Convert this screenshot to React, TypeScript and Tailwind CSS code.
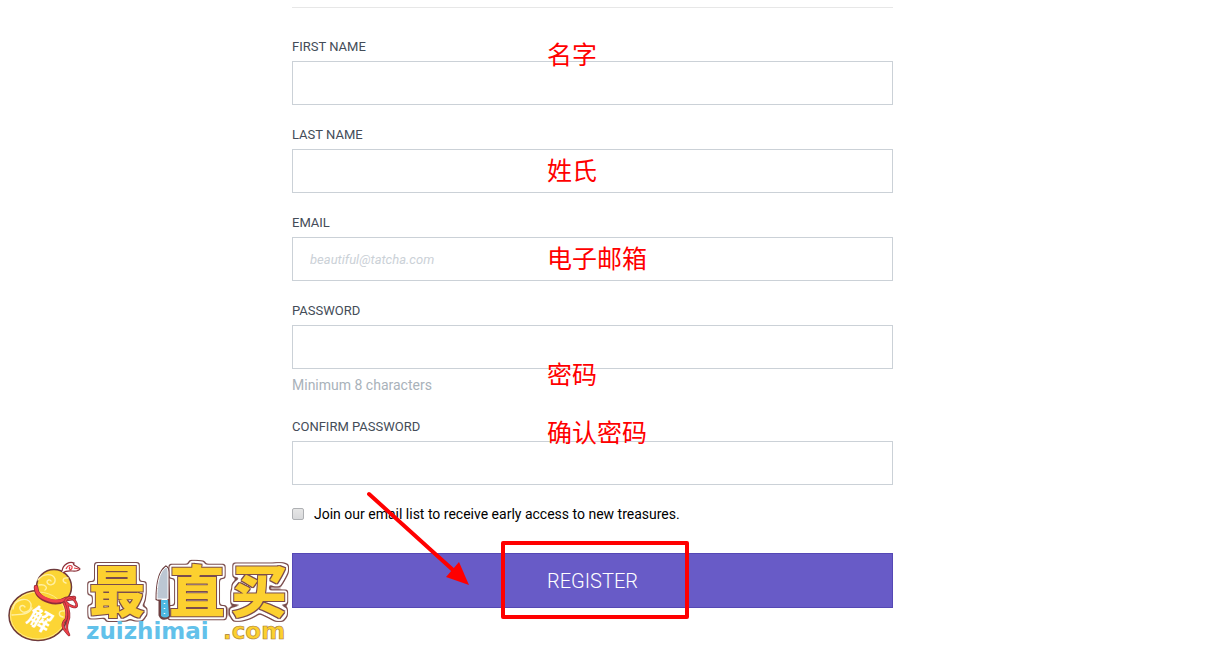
import { useState } from "react";

const fields = [
  { id: "firstName", label: "FIRST NAME", type: "text", note: "名字", notePos: "top-1" },
  { id: "lastName", label: "LAST NAME", type: "text", note: "姓氏", notePos: "top-8" },
  { id: "email", label: "EMAIL", type: "email", placeholder: "beautiful@tatcha.com", note: "电子邮箱", notePos: "top-8" },
  { id: "password", label: "PASSWORD", type: "password", hint: "Minimum 8 characters", note: "密码", notePos: "top-15" },
  { id: "confirmPassword", label: "CONFIRM PASSWORD", type: "password", note: "确认密码", notePos: "top-0.5" },
];

function Logo() {
  return (
    <svg width="295" height="94" viewBox="0 555 295 94" className="absolute bottom-0 left-0 overflow-visible" aria-label="zuizhimai.com">
      <defs>
        {/* brown / white / brown rings round the big characters */}
        <filter id="rings" x="-10%" y="-10%" width="120%" height="120%" colorInterpolationFilters="sRGB">
          <feMorphology in="SourceAlpha" operator="dilate" radius="4" result="outerBox" />
          <feGaussianBlur in="outerBox" stdDeviation="1.5" />
          <feComponentTransfer result="outer">
            <feFuncA type="linear" slope="4" intercept="-1.5" />
          </feComponentTransfer>
          <feMorphology in="SourceAlpha" operator="dilate" radius="3" result="middleBox" />
          <feGaussianBlur in="middleBox" stdDeviation="1.5" />
          <feComponentTransfer result="middle">
            <feFuncA type="linear" slope="4" intercept="-1.5" />
          </feComponentTransfer>
          <feMorphology in="SourceAlpha" operator="dilate" radius="1" result="inner" />
          <feFlood floodColor="#7a4c4c" />
          <feComposite in2="outer" operator="in" result="outerFill" />
          <feFlood floodColor="#ffffff" />
          <feComposite in2="middle" operator="in" result="middleFill" />
          <feFlood floodColor="#7a4c4c" />
          <feComposite in2="inner" operator="in" result="innerFill" />
          <feMerge>
            <feMergeNode in="outerFill" />
            <feMergeNode in="middleFill" />
            <feMergeNode in="innerFill" />
            <feMergeNode in="SourceGraphic" />
          </feMerge>
        </filter>
      </defs>

      {/* gourd */}
      <g stroke="#6e3a3c" strokeWidth="1.5">
        <ellipse cx="38" cy="615.5" rx="29" ry="25" fill="#fcd535" />
        <circle cx="54" cy="587" r="17.5" fill="#fcd535" />
      </g>
      <path d="M40 595 Q53 606 65 602 Q67 611 62 619 Q49 608 33 593Z" fill="#fcd535" />
      <ellipse cx="38" cy="615.5" rx="27.5" ry="23.5" fill="none" stroke="#fff0a0" strokeWidth="0.8" />
      <g fill="none" stroke="#fff0a5" strokeWidth="1.4" strokeLinecap="round">
        <path d="M38 580 C43 573 53 573 55 579 C56 585 48 587 47 582 C47 580 50 579 51 581" />
        <path d="M68 578 C62 577 62 582 66 583 M39 585 C46 584 48 588 45 590" />
        <path d="M13 609 C14 599 28 596 31 604 C32 612 22 615 20 609 C19 606 23 604 25 607" />
        <path d="M12 615 C19 614 28 616 32 608 M64 611 C58 610 58 616 63 617" />
      </g>
      <text x="40" y="628" textAnchor="middle" fontSize="24" fontWeight="700" fill="#fff" transform="rotate(30 40 620)" fontFamily="'Noto Sans CJK SC', sans-serif">
        解
      </text>
      {/* stem and ribbon */}
      <path d="M62 571 C63 564 70 561 74 563 C71 565 80 567 80 569 C77 574 68 568 63 573" fill="#fff" stroke="#8b3039" strokeWidth="1.2" />
      <path d="M66 569 C68 564 73 565 72 568 C71 571 68 569 70 567 M74 568 L79 569" fill="none" stroke="#e23b42" strokeWidth="1.2" />
      <path d="M36 587 Q36 597 49 601 Q58 604 66 599 L74 598" fill="none" stroke="#8e2c38" strokeWidth="4.5" strokeLinecap="round" />
      <path d="M36 587 Q36 596 49 600 Q58 603 66 599 L74 598" fill="none" stroke="#f0434c" strokeWidth="3" strokeLinecap="round" />
      <path d="M65 601 Q70 594 75 601 Q79 607 74 607 Q69 606 66 602 M64 603 Q68 611 66 619 Q61 624 64 629 L68 634 M66 602 Q71 615 68 621 Q65 629 69 635" fill="none" stroke="#8e2c38" strokeWidth="2.6" strokeLinecap="round" />
      <path d="M65 601 Q70 594 75 601 Q79 607 74 607 Q69 606 66 602 M64 603 Q68 611 66 619 Q61 624 64 629 L68 634 M66 602 Q71 615 68 621 Q65 629 69 635" fill="none" stroke="#ed4048" strokeWidth="1.5" strokeLinecap="round" />

      <g fontFamily="'Noto Sans CJK SC', sans-serif" fontWeight="900" fontSize="56" fill="#fcd02f" textAnchor="middle" filter="url(#rings)">
        <text x="117" y="612">最</text>
        <text x="197" y="612">直</text>
        <text x="259" y="612">买</text>
      </g>

      {/* knife */}
      <path d="M166 567 C159 572 157 584 157 599 L160 600 L160 615 Q163 621 169 616 L168 572 Q168 568 166 567Z" fill="#fff" stroke="#6e4142" strokeWidth="3" />
      <path d="M166 567 C159 572 157 584 157 599 L168 599 L168 572 Q168 568 166 567Z" fill="#bcc7d3" stroke="#fff" strokeWidth="1" />
      <path d="M161 600 H168 L169 616 Q165 619 161 616Z" fill="#4fb9e3" />
      <path d="M164.5 603v1M164.5 608v1M164.5 613v1" stroke="#fff" strokeWidth="1.5" />

      <g fontFamily="'DejaVu Sans', sans-serif" fontWeight="700" fontSize="23">
        <text x="86" y="639" fill="#62c1ea">zuizhimai</text>
        <text x="223" y="639" fill="#fcd02f" stroke="#a87b35" strokeWidth="0.6">.com</text>
      </g>
    </svg>
  );
}

export default function App() {
  const [values, setValues] = useState<Record<string, string>>({});
  const [joinList, setJoinList] = useState(false);

  return (
    <div className="relative min-h-screen bg-white px-4 pt-[7px] font-['Roboto','Noto_Sans_CJK_SC',sans-serif] md:pr-0 md:pl-[292px]">
      <form className="w-full max-w-[601px] border-t border-[#e7e7e7] pt-[29px]" onSubmit={(e) => e.preventDefault()}>
        <div className="flex flex-col gap-5">
          {fields.map((field) => (
            <div key={field.id} className="relative flex flex-col gap-1">
              <label htmlFor={field.id} className="text-[13px] leading-5 text-[#444c58]">
                {field.label}
              </label>
              <input
                id={field.id}
                type={field.type}
                placeholder={field.placeholder}
                value={values[field.id] || ""}
                onChange={(e) => setValues({ ...values, [field.id]: e.target.value })}
                className="h-11 w-full border border-[#cbd1d7] px-[17px] text-[13px] placeholder:text-[#cbd1d7] placeholder:italic"
              />
              {field.hint && <p className="text-sm leading-6 text-[#a9b2ba]">{field.hint}</p>}
              <span className={`pointer-events-none absolute left-[255px] font-['SimSun','Noto_Sans_CJK_SC',serif] text-[25px] leading-6 text-[#ff0000] ${field.notePos}`}>
                {field.note}
              </span>
            </div>
          ))}
        </div>

        <label className="mt-5 flex items-center gap-2.5 text-sm leading-[18px] text-black">
          <input
            type="checkbox"
            checked={joinList}
            onChange={(e) => setJoinList(e.target.checked)}
            className="size-3 appearance-none rounded-xs border border-[#aeb0b3] bg-linear-to-b from-[#e6e6e6] to-[#d8d9db] checked:bg-[#685bc7]"
          />
          Join our email list to receive early access to new treasures.
        </label>

        <div className="relative mt-[30px]">
          <button type="submit" className="h-[55px] w-full border border-[#5548b5] bg-[#685bc7] text-xl font-light text-white">
            REGISTER
          </button>
          <div className="pointer-events-none absolute -top-3 left-[209px] h-[78px] w-[188px] rounded-xs border-4 border-[#ff0000]" />
          <svg width="106" height="96" viewBox="0 0 106 96" className="pointer-events-none absolute -top-16 left-[73px]" aria-hidden="true">
            <path d="M4 5 L88 81" stroke="#ff0000" strokeWidth="4" strokeLinecap="round" />
            <path d="M104 96 L81 88 L94 73Z" fill="#ff0000" />
          </svg>
        </div>
      </form>
      <Logo />
    </div>
  );
}
